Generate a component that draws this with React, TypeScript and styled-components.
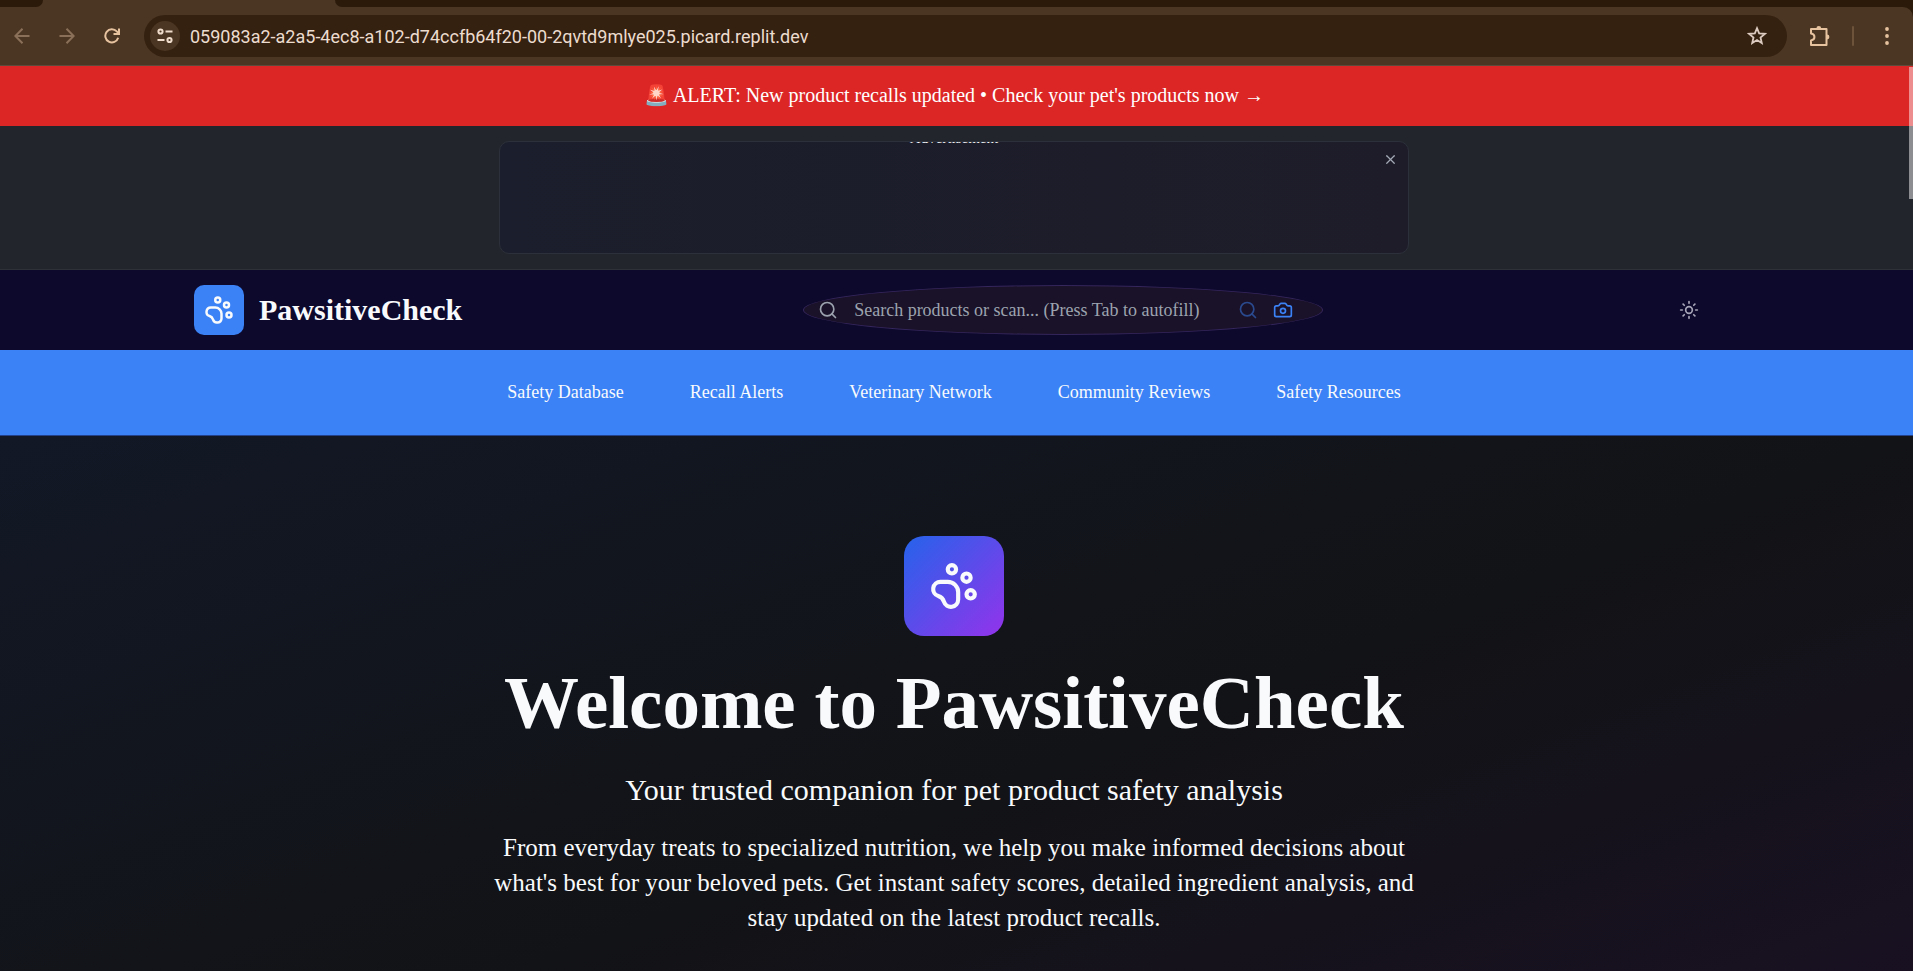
import React from 'react';
import styled, { createGlobalStyle } from 'styled-components';
import { Camera, PawPrint, Search, Sun, X } from 'lucide-react';

const Global = createGlobalStyle`
  *, *::before, *::after { box-sizing: border-box; }
  html, body, #root { height: 100%; }
  body {
    margin: 0;
    overflow: hidden;
    background: #111316;
    color: #f8fafc;
    font-family: "Liberation Serif", "Times New Roman", serif;
  }
  button, input { font: inherit; color: inherit; }
  button { border: 0; padding: 0; background: none; cursor: pointer; }
  a { color: inherit; text-decoration: none; }
  h1, h2, p { margin: 0; }
  svg { display: block; flex: none; }
`;

const Window = styled.div`
  display: flex;
  flex-direction: column;
  height: 100vh;
`;

const TabStrip = styled.div`
  display: flex;
  height: 7px;
  flex: none;
  background: #4b3624;
`;

const TabGap = styled.div<{ $side: 'left' | 'right' }>`
  width: ${(p) => (p.$side === 'left' ? '43px' : 'auto')};
  flex: ${(p) => (p.$side === 'left' ? 'none' : '1')};
  margin-left: ${(p) => (p.$side === 'left' ? '0' : '292px')};
  background: #2b1a09;
  border-radius: ${(p) => (p.$side === 'left' ? '0 0 14px 0' : '0 0 0 14px')};
`;

const ToolbarBack = styled.div`
  flex: none;
  background: #2b1a09;
`;

const Toolbar = styled.div`
  display: flex;
  align-items: center;
  gap: 20px;
  height: 59px;
  padding: 0 14px 0 9px;
  background: #4b3624;
  border-bottom: 1px solid #5c4a3a;
  border-top-right-radius: 10px;
`;

const ToolButton = styled.button<{ $dim?: boolean }>`
  display: flex;
  align-items: center;
  justify-content: center;
  width: 25px;
  height: 40px;
  color: ${(p) => (p.$dim ? '#8b7059' : '#e7c3a0')};
`;

const AddressBar = styled.div`
  display: flex;
  flex: 1;
  align-items: center;
  height: 42px;
  padding: 0 20px 0 6px;
  border-radius: 21px;
  background: #35210f;
`;

const SiteInfo = styled.button`
  display: flex;
  align-items: center;
  justify-content: center;
  width: 30px;
  height: 30px;
  border-radius: 15px;
  background: #4b3624;
  color: #f0dccb;
`;

const AddressInput = styled.input`
  flex: 1;
  min-width: 0;
  padding: 0 10px;
  border: 0;
  outline: 0;
  background: none;
  color: #ecdccf;
  font-family: Roboto, sans-serif;
  font-size: 18px;
`;

const StarButton = styled.button`
  color: #dccbc0;
`;

const Separator = styled.span`
  width: 2px;
  height: 20px;
  border-radius: 1px;
  background: #6d5339;
`;

const Viewport = styled.div`
  position: relative;
  flex: 1;
  min-height: 0;
  overflow: hidden;
`;

const ScrollThumb = styled.div`
  position: absolute;
  top: 1px;
  right: 0;
  width: 4px;
  height: 132px;
  background: rgba(255, 255, 255, 0.48);
`;

const Page = styled.div`
  display: flex;
  flex-direction: column;
  min-height: 100%;
`;

const AlertBar = styled.a`
  display: block;
  padding: 14px 5px 16px 0;
  background: #dc2626;
  color: #fff;
  font-size: 20px;
  line-height: 30px;
  text-align: center;
`;

const AdSection = styled.section`
  display: flex;
  justify-content: center;
  padding: 15px 5px 15px 0;
  background: #22252b;
  border-bottom: 1px solid #2f3139;
`;

const AdCard = styled.div`
  position: relative;
  width: 910px;
  height: 113px;
  overflow: hidden;
  border: 1px solid #2c303a;
  border-radius: 10px;
  background: linear-gradient(90deg, #1b1e2c, #1e1c29);
`;

const AdLabel = styled.p`
  margin-top: -14px;
  font-size: 15px;
  line-height: 20px;
  text-align: center;
`;

const AdClose = styled.button`
  position: absolute;
  top: 10px;
  right: 10px;
  color: #a3a9b5;
`;

const Header = styled.header`
  background: #0d092c;
  padding-right: 5px;
`;

const HeaderInner = styled.div`
  display: flex;
  align-items: center;
  justify-content: space-between;
  max-width: 1600px;
  height: 80px;
  margin: 0 auto;
  padding: 0 40px;
`;

const Brand = styled.a`
  display: flex;
  align-items: center;
  gap: 15px;
  font-size: 30px;
  font-weight: 700;
`;

const LogoTile = styled.span<{ $large?: boolean }>`
  display: flex;
  align-items: center;
  justify-content: center;
  width: ${(p) => (p.$large ? 100 : 50)}px;
  height: ${(p) => (p.$large ? 100 : 50)}px;
  border-radius: ${(p) => (p.$large ? 20 : 10)}px;
  background: ${(p) => (p.$large ? 'linear-gradient(135deg, #2563eb, #9333ea)' : '#3b82f6')};
  color: #f8fafc;
`;

const SearchForm = styled.form`
  display: flex;
  align-items: center;
  width: 520px;
  height: 50px;
  padding: 0 29px 0 14px;
  border: 1px solid #35265c;
  border-radius: 50%;
  background: #1a1228;
  color: #9ca3af;
`;

const SearchInput = styled.input`
  flex: 1;
  min-width: 0;
  padding: 0 0 0 16px;
  border: 0;
  outline: 0;
  background: none;
  font-size: 18px;
  &::placeholder { color: #9ca3af; opacity: 1; }
`;

const SearchAction = styled.button<{ $faded?: boolean }>`
  margin-left: 15px;
  color: #3b82f6;
  opacity: ${(p) => (p.$faded ? 0.5 : 1)};
`;

const ThemeButton = styled.button`
  display: flex;
  align-items: center;
  justify-content: center;
  width: 50px;
  height: 50px;
  color: #a7a5b8;
`;

const Nav = styled.nav`
  display: flex;
  justify-content: center;
  gap: 66px;
  padding: 25px 5px 25px 0;
  border-bottom: 1px solid #23418a;
  background: #3b82f6;
  font-size: 18px;
  line-height: 35px;
`;

const Hero = styled.main`
  display: flex;
  flex: 1;
  flex-direction: column;
  align-items: center;
  padding: 100px 5px 240px 0;
  background: linear-gradient(to bottom right, #121826 0%, #121316 50%, #1b1026 100%);
  text-align: center;
`;

const HeroTitle = styled.h1`
  margin-top: 29px;
  font-size: 75px;
  line-height: 75px;
`;

const HeroLead = styled.h2`
  margin-top: 30px;
  font-size: 30px;
  font-weight: 400;
  line-height: 40px;
`;

const HeroText = styled.p`
  max-width: 960px;
  margin-top: 20px;
  font-size: 25px;
  line-height: 35px;
`;

const navItems = [
  'Safety Database',
  'Recall Alerts',
  'Veterinary Network',
  'Community Reviews',
  'Safety Resources',
];

const ArrowIcon = ({ flip }: { flip?: boolean }) => (
  <svg width="16" height="16" viewBox="0 0 16 16" fill="none" stroke="currentColor" strokeWidth="2">
    <path d={flip ? 'M0.5 8h14M7.5 0.8 14.7 8l-7.2 7.2' : 'M15.5 8h-14M8.5 0.8 1.3 8l7.2 7.2'} />
  </svg>
);

const ReloadIcon = () => (
  <svg width="16" height="16" viewBox="0 0 16 16" fill="none" stroke="currentColor" strokeWidth="2">
    <path d="M14.2 9.8A6.6 6.6 0 1 1 12.8 3.4L14.5 5.2" />
    <path d="M15 0.5v5.5H9.5" />
  </svg>
);

const TuneIcon = () => (
  <svg width="16" height="16" viewBox="0 0 16 16" fill="none" stroke="currentColor" strokeWidth="2">
    <circle cx="3.5" cy="3.5" r="2.1" />
    <path d="M8.5 3.5H15.5M0.5 12H7.5" />
    <circle cx="12.5" cy="12" r="2.1" />
  </svg>
);

const StarIcon = () => (
  <svg width="20" height="20" viewBox="0 0 20 20" fill="none" stroke="currentColor" strokeWidth="1.8">
    <path d="M10 2.2l2.15 5.2 5.65.45-4.3 3.7 1.3 5.5L10 14.1l-4.8 2.95 1.3-5.5-4.3-3.7 5.65-.45z" />
  </svg>
);

const PuzzleIcon = () => (
  <svg width="22" height="22" viewBox="0 0 22 22" fill="none" stroke="currentColor" strokeWidth="2" strokeLinejoin="round">
    <path d="M2 4h15.5v16H2v-4.6c4.6-.8 4.6-6 0-6.8z" />
    <path d="M7.4 3.4a2.4 2.4 0 0 1 4.8 0zM18 9.6a2.4 2.4 0 0 1 0 4.8z" fill="currentColor" stroke="none" />
  </svg>
);

const DotsIcon = () => (
  <svg width="4" height="18" viewBox="0 0 4 18" fill="currentColor">
    <circle cx="2" cy="2" r="1.9" />
    <circle cx="2" cy="9" r="1.9" />
    <circle cx="2" cy="16" r="1.9" />
  </svg>
);

export default function App() {
  return (
    <Window>
      <Global />
      <TabStrip>
        <TabGap $side="left" />
        <TabGap $side="right" />
      </TabStrip>
      <ToolbarBack>
        <Toolbar>
          <ToolButton $dim aria-label="Back"><ArrowIcon /></ToolButton>
          <ToolButton $dim aria-label="Forward"><ArrowIcon flip /></ToolButton>
          <ToolButton aria-label="Reload"><ReloadIcon /></ToolButton>
          <AddressBar>
            <SiteInfo aria-label="Site information"><TuneIcon /></SiteInfo>
            <AddressInput
              aria-label="Address"
              defaultValue="059083a2-a2a5-4ec8-a102-d74ccfb64f20-00-2qvtd9mlye025.picard.replit.dev"
            />
            <StarButton aria-label="Bookmark"><StarIcon /></StarButton>
          </AddressBar>
          <ToolButton aria-label="Extensions"><PuzzleIcon /></ToolButton>
          <Separator />
          <ToolButton aria-label="Menu"><DotsIcon /></ToolButton>
        </Toolbar>
      </ToolbarBack>
      <Viewport>
        <Page>
          <AlertBar href="#recalls">🚨 ALERT: New product recalls updated • Check your pet's products now →</AlertBar>
          <AdSection>
            <AdCard>
              <AdLabel>Advertisement</AdLabel>
              <AdClose aria-label="Close advertisement"><X size={15} /></AdClose>
            </AdCard>
          </AdSection>
          <Header>
            <HeaderInner>
              <Brand href="#home">
                <LogoTile><PawPrint size={30} /></LogoTile>
                PawsitiveCheck
              </Brand>
              <SearchForm onSubmit={(e) => e.preventDefault()}>
                <Search size={20} />
                <SearchInput
                  aria-label="Search products"
                  placeholder="Search products or scan... (Press Tab to autofill)"
                />
                <SearchAction $faded aria-label="Search"><Search size={20} /></SearchAction>
                <SearchAction type="button" aria-label="Scan with camera"><Camera size={20} /></SearchAction>
              </SearchForm>
              <ThemeButton aria-label="Toggle theme"><Sun size={20} /></ThemeButton>
            </HeaderInner>
          </Header>
          <Nav>
            {navItems.map((label) => (
              <a key={label} href={`#${label.toLowerCase().replace(' ', '-')}`}>{label}</a>
            ))}
          </Nav>
          <Hero>
            <LogoTile $large><PawPrint size={50} /></LogoTile>
            <HeroTitle>Welcome to PawsitiveCheck</HeroTitle>
            <HeroLead>Your trusted companion for pet product safety analysis</HeroLead>
            <HeroText>
              From everyday treats to specialized nutrition, we help you make informed decisions about
              what's best for your beloved pets. Get instant safety scores, detailed ingredient analysis,
              and stay updated on the latest product recalls.
            </HeroText>
          </Hero>
        </Page>
        <ScrollThumb />
      </Viewport>
    </Window>
  );
}
